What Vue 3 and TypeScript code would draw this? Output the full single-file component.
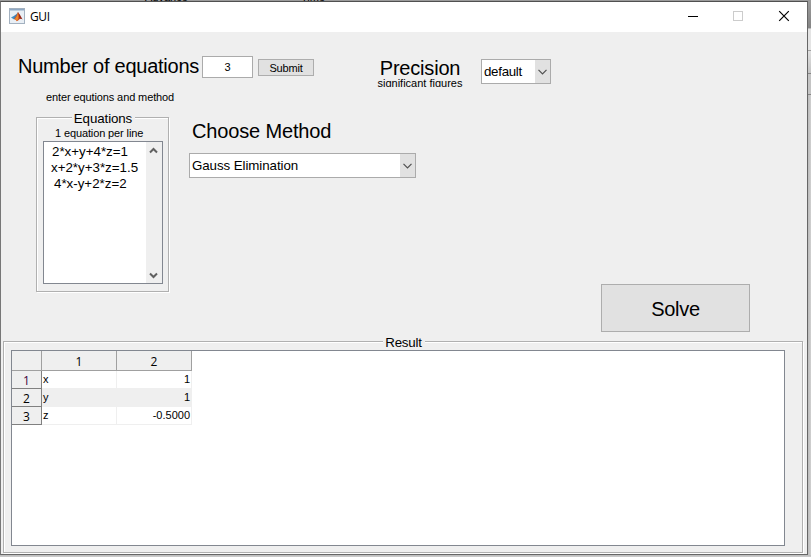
<script setup lang="ts">
import { ref } from 'vue'

interface ResultRow {
  name: string
  value: string
}

const count = ref<string>('3')
const equations: string[] = ['2*x+y+4*z=1', 'x+2*y+3*z=1.5', '4*x-y+2*z=2']
const columns: number[] = [1, 2]
const rows: ResultRow[] = [
  { name: 'x', value: '1' },
  { name: 'y', value: '1' },
  { name: 'z', value: '-0.5000' },
]
</script>

<template>
  <div class="desktop">
    <div class="behind-top">
      <span class="behind-a">Advance</span>
      <span class="behind-b">Time</span>
    </div>
    <div class="middle">
      <main class="window">
        <header class="titlebar">
          <svg class="logo" width="16" height="16" viewBox="0 0 16 16">
            <rect x="0.5" y="0.5" width="15" height="15" fill="#e9eff5" stroke="#a3b1c0" />
            <rect x="1" y="1" width="14" height="1.5" fill="#8fa9c5" />
            <path d="M2 9.5 L5.2 7.8 L7 9.4 L4.8 11.3 Z" fill="#3f8fc4" />
            <path d="M5.2 7.8 Q7.5 6.8 9 4 L8.2 8.2 L6.2 11 L4.8 11.3 Z" fill="#4a7fb0" />
            <path d="M9 4 Q7.9 8 5 11.3 Q6.5 11 7.8 13.3 Q9.5 12.8 11 10.6 Q10.6 6 9 4 Z" fill="#d2501f" />
            <path d="M9 4 Q11 6.5 13.6 11.5 Q12 10.2 10.6 11.2 Q9.8 7 9 4 Z" fill="#96271a" />
            <path d="M9 4.8 Q9.6 7.8 9.2 10.8 L7.8 13.1 Q7 11.5 6 11 Q8.2 8.4 9 4.8 Z" fill="#ef8a2c" />
          </svg>
          <span class="title">GUI</span>
          <div class="controls">
            <svg width="45" height="30" viewBox="0 0 45 30"><path d="M17 14.5H27" stroke="#000" /></svg>
            <svg width="46" height="30" viewBox="0 0 46 30"><rect x="17.5" y="9.5" width="9" height="9" fill="none" stroke="#ccc" /></svg>
            <svg width="45" height="30" viewBox="0 0 45 30"><path d="M17.2 9.2L26.8 18.8M26.8 9.2L17.2 18.8" stroke="#000" stroke-width="1.2" /></svg>
          </div>
        </header>

        <section class="top-row">
          <div class="number">
            <div class="big number-label">Number of equations</div>
            <div class="small hint">enter equtions and method</div>
          </div>
          <div class="count small">{{ count }}</div>
          <button class="btn submit small">Submit</button>
          <div class="precision">
            <div class="big">Precision</div>
            <div class="small figures">significant figures</div>
          </div>
          <div class="select precision-select">
            <span>default</span>
            <i class="arrow"><svg width="9" height="6" viewBox="0 0 9 6"><path d="M0.5 0.8L4.5 4.8L8.5 0.8" fill="none" stroke="#505050" stroke-width="1.2" /></svg></i>
          </div>
        </section>

        <section class="work-row">
          <div class="panel equations">
            <div class="legend">Equations</div>
            <div class="small per-line">1 equation per line</div>
            <div class="listbox">
              <div class="lines">
                <div v-for="(eq, i) in equations" :key="eq" :class="['line', 'line-' + i]">{{ eq }}</div>
              </div>
              <div class="scroll">
                <svg width="9" height="7" viewBox="0 0 9 7"><path d="M1 5.5L4.5 2L8 5.5" fill="none" stroke="#606060" stroke-width="2" /></svg>
                <svg width="9" height="7" viewBox="0 0 9 7"><path d="M1 1.5L4.5 5L8 1.5" fill="none" stroke="#606060" stroke-width="2" /></svg>
              </div>
            </div>
          </div>
          <div class="method">
            <div class="big method-label">Choose Method</div>
            <div class="select method-select">
              <span>Gauss Elimination</span>
              <i class="arrow"><svg width="9" height="6" viewBox="0 0 9 6"><path d="M0.5 0.8L4.5 4.8L8.5 0.8" fill="none" stroke="#505050" stroke-width="1.2" /></svg></i>
            </div>
          </div>
          <button class="btn solve big">Solve</button>
        </section>

        <section class="panel result">
          <div class="legend">Result</div>
          <div class="sheet">
            <div class="grid">
              <div class="head corner"></div>
              <div v-for="c in columns" :key="c" class="head">{{ c }}</div>
              <template v-for="(row, i) in rows" :key="row.name">
                <div class="row-head" :class="{ first: i === 0 }">{{ i + 1 }}</div>
                <div class="cell" :class="{ odd: i % 2 === 1 }">{{ row.name }}</div>
                <div class="cell value" :class="{ odd: i % 2 === 1 }">{{ row.value }}</div>
              </template>
            </div>
          </div>
        </section>
      </main>
      <div class="behind-right">
        <div class="b1"></div>
        <div class="b2"></div>
        <div class="b3"></div>
        <div class="b4"></div>
        <div class="b5"></div>
      </div>
    </div>
    <div class="behind-bottom"></div>
  </div>
</template>

<style>
body {
  overflow: hidden;
}
</style>

<style scoped>
* {
  box-sizing: border-box;
}
.desktop {
  width: 811px;
  height: 557px;
  overflow: hidden;
  display: flex;
  flex-direction: column;
  font: 13.33px/16px 'Liberation Sans', Arial, sans-serif;
  color: #000;
  background: #c9c9c9;
}
.behind-top {
  height: 1px;
  flex: none;
  background: #9b9b9b;
  overflow: hidden;
  display: flex;
  font-size: 11px;
  line-height: 1px;
  padding-left: 145px;
}
.behind-a {
  width: 156px;
  margin-top: -3px;
}
.behind-b {
  margin-top: -3px;
}
.middle {
  display: flex;
  height: 554px;
  flex: none;
}
.window {
  width: 808px;
  height: 554px;
  border: 1px solid #666;
  border-top-color: #505050;
  border-left-color: #777;
  background: #efefef;
  display: flex;
  flex-direction: column;
}
.titlebar {
  height: 30px;
  flex: none;
  background: #fff;
  display: flex;
  padding-left: 8px;
}
.logo {
  margin-top: 6px;
}
.title {
  margin: 7px 0 0 5px;
  font: 12px/16px 'Open Sans', 'Noto Sans', sans-serif;
  letter-spacing: -0.4px;
}
.controls {
  display: flex;
  margin-left: auto;
}
.big {
  font-size: 20px;
  line-height: 24px;
  white-space: nowrap;
}
.small {
  font-size: 11px;
  line-height: 13px;
  white-space: nowrap;
}
.top-row {
  height: 85px;
  flex: none;
  display: flex;
  align-items: flex-start;
  padding-left: 16px;
}
.number {
  width: 185px;
  padding-top: 22px;
}
.number-label {
  padding-left: 1px;
  letter-spacing: -0.24px;
}
.hint {
  padding: 13px 0 0 29px;
  letter-spacing: -0.11px;
}
.count {
  width: 51px;
  height: 22px;
  margin-top: 24px;
  border: 1px solid #ababab;
  background: #fff;
  text-align: center;
  line-height: 21px;
}
.btn {
  font-family: inherit;
  color: #000;
  padding: 0;
  border: 1px solid #adadad;
  background: #e1e1e1;
  border-radius: 0;
}
.submit {
  width: 56px;
  height: 17px;
  margin: 27px 0 0 5px;
  line-height: 16px;
  letter-spacing: -0.2px;
}
.precision {
  width: 88px;
  margin: 24px 0 0 62px;
  text-align: center;
}
.figures {
  height: 10px;
  margin-top: -3px;
  overflow: hidden;
}
.precision .big {
  letter-spacing: -0.2px;
}
.select {
  height: 25px;
  border: 1px solid #ababab;
  background: #fff;
  display: flex;
  justify-content: space-between;
  padding-left: 2px;
  line-height: 23px;
  letter-spacing: -0.08px;
}
.arrow {
  width: 15px;
  background: #e1e1e1;
  display: flex;
  align-items: center;
  justify-content: center;
}
.precision-select {
  width: 70px;
  margin: 27px 0 0 17px;
  letter-spacing: -0.3px;
}
.work-row {
  height: 224px;
  flex: none;
  display: flex;
  align-items: flex-start;
  padding-left: 35px;
}
.panel {
  border: 1px solid #b0b0b0;
  box-shadow: 1px 1px 0 #fff, inset 1px 1px 0 #fff;
  display: flex;
  flex-direction: column;
  flex: none;
}
.legend {
  align-self: center;
  height: 16px;
  margin-top: -8px;
  padding: 1px 3px 0 2px;
  background: #efefef;
  flex: none;
  letter-spacing: -0.1px;
}
.equations {
  width: 133px;
  height: 175px;
}
.equations .legend {
  margin-left: 2px;
}
.per-line {
  padding: 1px 0 1px 18px;
  letter-spacing: -0.12px;
}
.listbox {
  width: 120px;
  height: 143px;
  margin-left: 6px;
  border: 1px solid #828790;
  background: #fff;
  display: flex;
  flex: none;
}
.lines {
  flex: 1;
  padding-top: 2px;
  white-space: nowrap;
}
.line {
  padding-left: 8px;
}
.line-1 {
  padding-left: 7px;
}
.line-2 {
  padding-left: 10px;
}
.scroll {
  width: 16px;
  background: #efefef;
  display: flex;
  flex-direction: column;
  justify-content: space-between;
  align-items: center;
  padding: 5px 2px 4px 0;
}
.method {
  width: 227px;
  margin-left: 20px;
}
.method-label {
  padding: 2px 0 0 3px;
  letter-spacing: -0.15px;
}
.method-select {
  margin-top: 10px;
}
.solve {
  width: 149px;
  height: 48px;
  margin: 167px 0 0 185px;
  padding-top: 2px;
  letter-spacing: -0.3px;
}
.result {
  width: 800px;
  height: 212px;
  margin-left: 2px;
}
.result .legend {
  margin-left: 2px;
  letter-spacing: -0.2px;
}
.sheet {
  width: 774px;
  height: 196px;
  margin-left: 7px;
  border: 1px solid #828790;
  background: #fff;
  flex: none;
}
.grid {
  display: grid;
  grid-template-columns: 30px 75px 75px;
  grid-template-rows: 20px 18px 18px 18px;
}
.head,
.row-head {
  background: #efefef;
  border-right: 1px solid #a0a0a0;
  border-bottom: 1px solid #a0a0a0;
  text-align: center;
  font: 12px/21px 'Open Sans', 'Noto Sans', sans-serif;
}
.row-head {
  border-color: #808080;
  line-height: 19px;
}
.row-head.first {
  color: #400040;
}
.cell {
  border-right: 1px solid #efefef;
  border-bottom: 1px solid #efefef;
  font-size: 11px;
  line-height: 17px;
  padding: 0 1px;
}
.value {
  text-align: right;
}
.odd {
  background: #efefef;
}
.behind-right {
  width: 3px;
  display: flex;
  flex-direction: column;
}
.b1 {
  height: 27px;
  background: linear-gradient(#9b9b9b, #858585);
}
.b2 {
  height: 23px;
  background: #e4e4e4;
  border-top: 1px solid #bbb;
  border-bottom: 1px solid #a0a0a0;
}
.b3 {
  height: 23px;
  background: linear-gradient(#e0e0e0, #c4c4c4);
  border-bottom: 1px solid #858585;
}
.b4 {
  height: 21px;
  background: #c4c4c4;
  border-bottom: 1px solid #858585;
}
.b5 {
  flex: 1;
  background: linear-gradient(90deg, #bcbcbc, #d0d0d0);
}
.behind-bottom {
  flex: 1;
  background: linear-gradient(#bcbcbc, #cecece);
}
</style>
